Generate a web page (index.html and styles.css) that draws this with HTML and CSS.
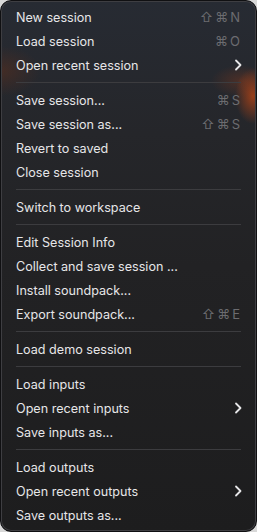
FILE: index.html
```html
<!DOCTYPE html>
<html lang="en">
<head>
    <meta charset="UTF-8">
    <meta name="viewport" content="width=device-width, initial-scale=1.0">
    <title>Session menu</title>
    <link rel="stylesheet" href="styles.css">
</head>
<body>
    <div class="menu">
        <div class="item"><span>New session</span><span class="keys">&#x21E7;&#x2318;N</span></div>
        <div class="item"><span>Load session</span><span class="keys">&#x2318;O</span></div>
        <div class="item"><span>Open recent session</span><svg class="chevron" viewBox="0 0 8 12"><path d="M2 1.5 L6.5 6 L2 10.5"/></svg></div>
        <div class="sep"></div>
        <div class="item"><span>Save session...</span><span class="keys">&#x2318;S</span></div>
        <div class="item"><span>Save session as...</span><span class="keys">&#x21E7;&#x2318;S</span></div>
        <div class="item"><span>Revert to saved</span></div>
        <div class="item"><span>Close session</span></div>
        <div class="sep"></div>
        <div class="item"><span>Switch to workspace</span></div>
        <div class="sep"></div>
        <div class="item"><span>Edit Session Info</span></div>
        <div class="item"><span>Collect and save session ...</span></div>
        <div class="item"><span>Install soundpack...</span></div>
        <div class="item"><span>Export soundpack...</span><span class="keys">&#x21E7;&#x2318;E</span></div>
        <div class="sep"></div>
        <div class="item"><span>Load demo session</span></div>
        <div class="sep"></div>
        <div class="item"><span>Load inputs</span></div>
        <div class="item"><span>Open recent inputs</span><svg class="chevron" viewBox="0 0 8 12"><path d="M2 1.5 L6.5 6 L2 10.5"/></svg></div>
        <div class="item"><span>Save inputs as...</span></div>
        <div class="sep"></div>
        <div class="item"><span>Load outputs</span></div>
        <div class="item"><span>Open recent outputs</span><svg class="chevron" viewBox="0 0 8 12"><path d="M2 1.5 L6.5 6 L2 10.5"/></svg></div>
        <div class="item"><span>Save outputs as...</span></div>
    </div>
</body>
</html>
```

FILE: styles.css
```css
body {
    margin: 0;
    background: #d8d8d8;
    font-family: Inter, "Liberation Sans", sans-serif;
}

.menu {
    box-sizing: border-box;
    width: 257px;
    height: 532px;
    padding: 4px 0;
    border-radius: 11px;
    border: 1px solid #101012;
    box-shadow: inset 0 0 0 1px #3e3e42;
    background:
        radial-gradient(ellipse 18px 28px at 252px 95px, rgba(190, 70, 20, 0.75), transparent),
        radial-gradient(ellipse 30px 16px at 240px 80px, rgba(150, 60, 25, 0.35), transparent),
        radial-gradient(ellipse 40px 25px at 0px 70px, rgba(120, 50, 20, 0.35), transparent),
        linear-gradient(#272b33 0%, #25262a 25%, #222224 50%, #1d1d1e 100%);
    color: #e6e6e8;
    font-size: 12.6px;
    overflow: hidden;
}

.item {
    display: flex;
    align-items: center;
    justify-content: space-between;
    height: 24px;
    padding: 0 15px;
}

.keys {
    color: #6c6c70;
    font-size: 13px;
    letter-spacing: 2px;
    margin-right: -1px;
}

.chevron {
    width: 8px;
    height: 12px;
    margin-right: -1px;
}

.chevron path {
    fill: none;
    stroke: #e6e6e8;
    stroke-width: 1.8;
    stroke-linecap: round;
    stroke-linejoin: round;
}

.sep {
    height: 1px;
    margin: 5px 15px;
    background: #3c3c3f;
}
```
